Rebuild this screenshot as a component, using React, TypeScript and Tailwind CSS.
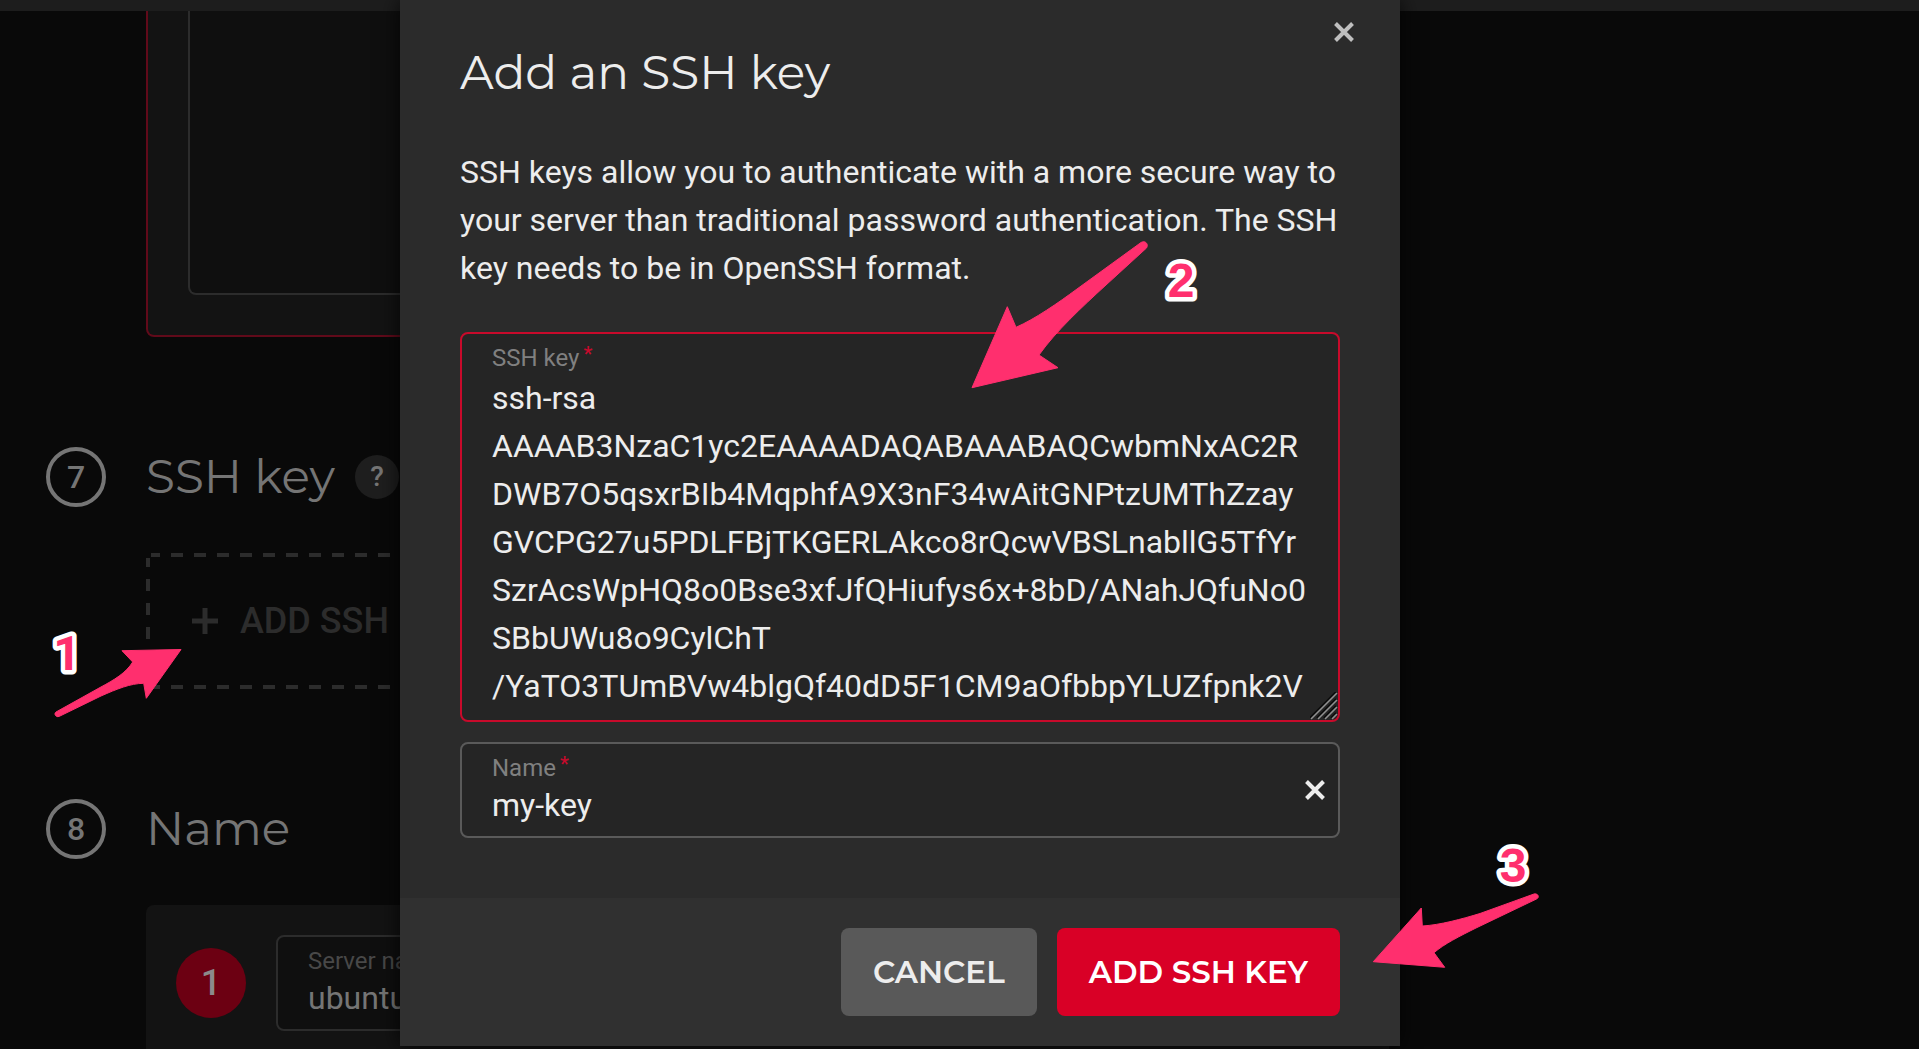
import type { ReactNode } from "react";

const SSH_KEY = [
  "ssh-rsa",
  "AAAAB3NzaC1yc2EAAAADAQABAAABAQCwbmNxAC2R",
  "DWB7O5qsxrBIb4MqphfA9X3nF34wAitGNPtzUMThZzay",
  "GVCPG27u5PDLFBjTKGERLAkco8rQcwVBSLnabllG5TfYr",
  "SzrAcsWpHQ8o0Bse3xfJfQHiufys6x+8bD/ANahJQfuNo0",
  "SBbUWu8o9CylChT",
  "/YaTO3TUmBVw4blgQf40dD5F1CM9aOfbbpYLUZfpnk2V",
].join("\n");

function CrossIcon() {
  return (
    <svg viewBox="0 0 20 20" className="size-5" fill="none" stroke="currentColor" strokeWidth="4" aria-hidden="true">
      <path d="M1.5 1.5 18.5 18.5M18.5 1.5 1.5 18.5" />
    </svg>
  );
}

function StepHeading({ number, title, children }: { number: number; title: string; children?: ReactNode }) {
  return (
    <div className="flex h-[60px] items-center gap-10">
      <span className="flex size-[60px] shrink-0 items-center justify-center rounded-full border-4 border-[#757575] text-[32px] leading-none font-medium">
        {number}
      </span>
      <div className="flex items-center gap-5">
        <h2 className="font-['Montserrat','Inter',sans-serif] text-[47px] leading-[60px] font-normal whitespace-nowrap">
          {title}
        </h2>
        {children}
      </div>
    </div>
  );
}

function Required() {
  return (
    <span className="ml-1 align-[5px] text-xl leading-none font-medium text-[#c60a2c]" aria-hidden="true">
      *
    </span>
  );
}

function ServerForm() {
  return (
    <main className="ml-[46px] w-[70%] text-[#757575]">
      <section className="ml-[100px] h-[326px] rounded-b-lg border-x-2 border-b-2 border-[#610a1a] bg-[#131313] px-10 pb-10">
        <div className="h-full rounded-b-lg border-x-2 border-b-2 border-[#2c2c2c] bg-[#0f0f0f]" />
      </section>

      <section className="mt-[110px]">
        <StepHeading number={7} title="SSH key">
          <button
            type="button"
            aria-label="Help"
            className="flex size-11 items-center justify-center rounded-full bg-[#1e1e1e] text-[28px] leading-none font-medium"
          >
            ?
          </button>
        </StepHeading>
        <button
          type="button"
          className="relative mt-[46px] ml-[100px] flex h-[136px] w-[420px] items-center gap-[22px] px-[46px] text-4xl font-medium whitespace-nowrap text-[#2c2c2c]"
        >
          <svg className="absolute inset-0 size-full" stroke="currentColor" strokeWidth="4" aria-hidden="true">
            <line x1="5" y1="2" x2="100%" y2="2" strokeDasharray="12 11" strokeDashoffset="3" />
            <line x1="5" y1="134" x2="100%" y2="134" strokeDasharray="12 11" strokeDashoffset="3" />
            <line x1="2" y1="5" x2="2" y2="131" strokeDasharray="12 12" strokeDashoffset="3" />
            <line x1="418" y1="5" x2="418" y2="131" strokeDasharray="12 12" strokeDashoffset="3" />
          </svg>
          <svg viewBox="0 0 26 26" className="size-[26px] shrink-0" fill="none" stroke="currentColor" strokeWidth="5" aria-hidden="true">
            <path d="M13 0V26M0 13H26" />
          </svg>
          ADD SSH KEY
        </button>
      </section>

      <section className="mt-[110px]">
        <StepHeading number={8} title="Name" />
        <div className="mt-[46px] ml-[100px] flex items-center gap-[30px] rounded-lg bg-[#131313] p-[30px]">
          <span className="flex size-[70px] shrink-0 items-center justify-center rounded-full bg-[#6c0012] text-4xl leading-none font-medium text-[#8b8b8b]">
            1
          </span>
          <div className="h-24 flex-1 rounded-lg border-2 border-[#2c2c2c] bg-[#0f0f0f] px-[30px] pt-[10px]">
            <label htmlFor="server-name" className="block text-2xl leading-7 text-[#484848]">
              Server name
            </label>
            <input
              id="server-name"
              defaultValue="ubuntu-server"
              className="block h-[46px] w-full bg-transparent text-[32px] outline-none"
            />
          </div>
        </div>
      </section>
    </main>
  );
}

function SshKeyDialog() {
  return (
    <div
      role="dialog"
      aria-modal="true"
      aria-labelledby="dialog-title"
      className="relative w-full max-w-[1000px] bg-[#2b2b2b] text-[#ededed] shadow-[0_0_20px_rgba(0,0,0,0.8)]"
    >
      <button
        type="button"
        aria-label="Close"
        className="absolute top-0 right-6 flex size-16 items-center justify-center text-[#bfbfbf]"
      >
        <CrossIcon />
      </button>

      <div className="px-[60px] pt-[43px] pb-[60px]">
        <h1
          id="dialog-title"
          className="font-['Montserrat','Inter',sans-serif] text-[47px] leading-[60px] font-normal"
        >
          Add an SSH key
        </h1>
        <p className="mt-[45px] text-[32px] leading-[48px]">
          SSH keys allow you to authenticate with a more secure way to your server than traditional password
          authentication. The SSH key needs to be in OpenSSH format.
        </p>

        <div className="relative mt-10 rounded-lg border-2 border-[#c80a2b] bg-[#252525] px-[30px] py-[10px]">
          <label htmlFor="ssh-key" className="block h-7 text-2xl leading-7 text-[#808080]">
            SSH key
            <Required />
          </label>
          <textarea
            id="ssh-key"
            required
            spellCheck={false}
            defaultValue={SSH_KEY}
            className="mt-0.5 block h-[336px] w-full resize-none overflow-hidden bg-transparent text-[32px] leading-[48px] whitespace-pre outline-none"
          />
          <svg viewBox="0 0 28 28" className="absolute right-0 bottom-0 size-7" fill="none" aria-hidden="true">
            <path d="M0 26 26 0M7 26 26 7M14 26 26 14M21 26 26 21" stroke="#0c0c0c" strokeWidth="2" />
            <path d="M1 27 27 1M8 27 27 8M15 27 27 15M22 27 27 22" stroke="#909090" strokeWidth="1.6" />
          </svg>
        </div>

        <div className="relative mt-5 h-24 rounded-lg border-2 border-[#5a5a5a] bg-[#252525] px-[30px] pt-[10px]">
          <label htmlFor="key-name" className="block h-7 text-2xl leading-7 text-[#808080]">
            Name
            <Required />
          </label>
          <input
            id="key-name"
            required
            defaultValue="my-key"
            className="block h-[46px] w-full bg-transparent text-[32px] outline-none"
          />
          <button
            type="button"
            aria-label="Clear name"
            className="absolute inset-y-0 right-0 flex w-[46px] items-center justify-center"
          >
            <CrossIcon />
          </button>
        </div>
      </div>

      <footer className="flex justify-end gap-5 bg-[#303030] px-[60px] py-[30px] font-['Montserrat','Inter',sans-serif] text-[31px] font-semibold">
        <button type="button" className="h-[88px] rounded-lg bg-[#595959] px-8">
          CANCEL
        </button>
        <button type="button" className="h-[88px] rounded-lg bg-[#d90026] px-8 text-white">
          ADD SSH KEY
        </button>
      </footer>
    </div>
  );
}

function Callout({
  label,
  x,
  y,
  path,
  viewBox,
  className,
  textClassName,
}: {
  label: string;
  x: number;
  y: number;
  path: string;
  viewBox: string;
  className: string;
  textClassName: string;
}) {
  return (
    <svg viewBox={viewBox} className={className} aria-hidden="true">
      <path d={path} fill="#ff2f6e" stroke="#ff2f6e" strokeWidth="1" strokeLinejoin="round" />
      <text
        x={x}
        y={y}
        textAnchor="middle"
        fill="#ff2f6e"
        stroke="#ffffff"
        strokeWidth="9"
        strokeLinejoin="round"
        paintOrder="stroke"
        className={textClassName}
      >
        {label}
      </text>
    </svg>
  );
}

export default function App() {
  return (
    <div className="relative h-screen overflow-hidden bg-[#090909] font-['Roboto',sans-serif]">
      <header className="h-[11px] bg-[#1d1d1d]" />
      <ServerForm />

      <div className="absolute inset-0 flex items-start justify-center pr-[119px]">
        <SshKeyDialog />
      </div>

      <Callout
        label="1"
        x={67}
        y={670}
        viewBox="40 620 150 110"
        className="pointer-events-none absolute top-[620px] left-[40px] h-[110px] w-[150px]"
        textClassName="font-['Roboto',sans-serif] text-5xl font-bold"
        path="M181 649.5 122 650.7 132.7 662C126 673 114 680 100 687.500L56 712C54 713.500 55 716.500 58 716.700L60 716 101 696C117 689 130 683.500 143.700 683.300L146.300 698.300Z"
      />
      <Callout
        label="2"
        x={1181}
        y={297}
        viewBox="971 235 249 165"
        className="pointer-events-none absolute top-[235px] left-[971px] h-[165px] w-[249px]"
        textClassName="font-['Liberation_Sans',Arial,sans-serif] text-5xl font-bold"
        path="M972 387.700 1007.300 306.700 1016 327.300C1035 319 1058 303 1077 289L1141 242.500C1145 240 1149 244 1146.500 248L1106 285C1082 307 1056 331 1039 355L1058 367.700Z"
      />
      <Callout
        label="3"
        x={1513}
        y={882}
        viewBox="1360 830 200 150"
        className="pointer-events-none absolute top-[830px] left-[1360px] h-[150px] w-[200px]"
        textClassName="font-['Liberation_Sans',Arial,sans-serif] text-5xl font-bold"
        path="M1373.300 961.700 1421.300 908 1422.300 926C1440 925 1462 919 1480 913.500L1534 894C1538 893 1540 897.500 1536.500 899L1476 928C1460 936 1444 944 1434 952.700L1444.700 967.300Z"
      />
    </div>
  );
}
